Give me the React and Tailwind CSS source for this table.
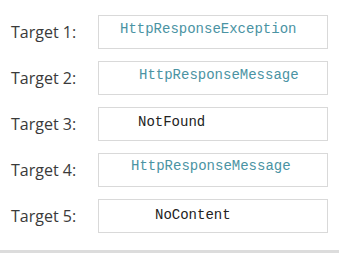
import React from "react";

const rows = [
  { label: "Target 1:", text: "HttpResponseException", teal: true, indent: "pl-[21px]", pb: "pb-[6px]" },
  { label: "Target 2:", text: "HttpResponseMessage", teal: true, indent: "pl-[40px]", pb: "pb-[6px]" },
  { label: "Target 3:", text: "NotFound", teal: false, indent: "pl-[39px]", pb: "pb-[3px]" },
  { label: "Target 4:", text: "HttpResponseMessage", teal: true, indent: "pl-[32px]", pb: "pb-[7px]" },
  { label: "Target 5:", text: "NoContent", teal: false, indent: "pl-[56px]", pb: "pb-[2px]" },
];

export default function App() {
  return (
    <div className="w-[339px] h-[253px] bg-white flex flex-col overflow-hidden">
      <div className="flex flex-col gap-[12px] pt-[15px] pl-[11px] flex-1">
        {rows.map((r) => (
          <div key={r.label} className="flex items-center h-[34px]">
            <div
              className="w-[87px] text-[16px] text-[#3a3a3a] pb-[1px]"
              style={{ fontFamily: "'Open Sans', 'Noto Sans', sans-serif" }}
            >
              {r.label}
            </div>
            <div
              className={`w-[230px] h-[34px] border border-[#d9d9d9] flex items-center ${r.indent} ${r.pb} text-[14px] ${
                r.teal ? "text-[#4a93a3]" : "text-[#222222]"
              }`}
              style={{ fontFamily: "'Liberation Mono', 'DejaVu Sans Mono', monospace" }}
            >
              {r.text}
            </div>
          </div>
        ))}
      </div>
      <div className="h-[3px] bg-[#dcdcdc]" />
    </div>
  );
}
